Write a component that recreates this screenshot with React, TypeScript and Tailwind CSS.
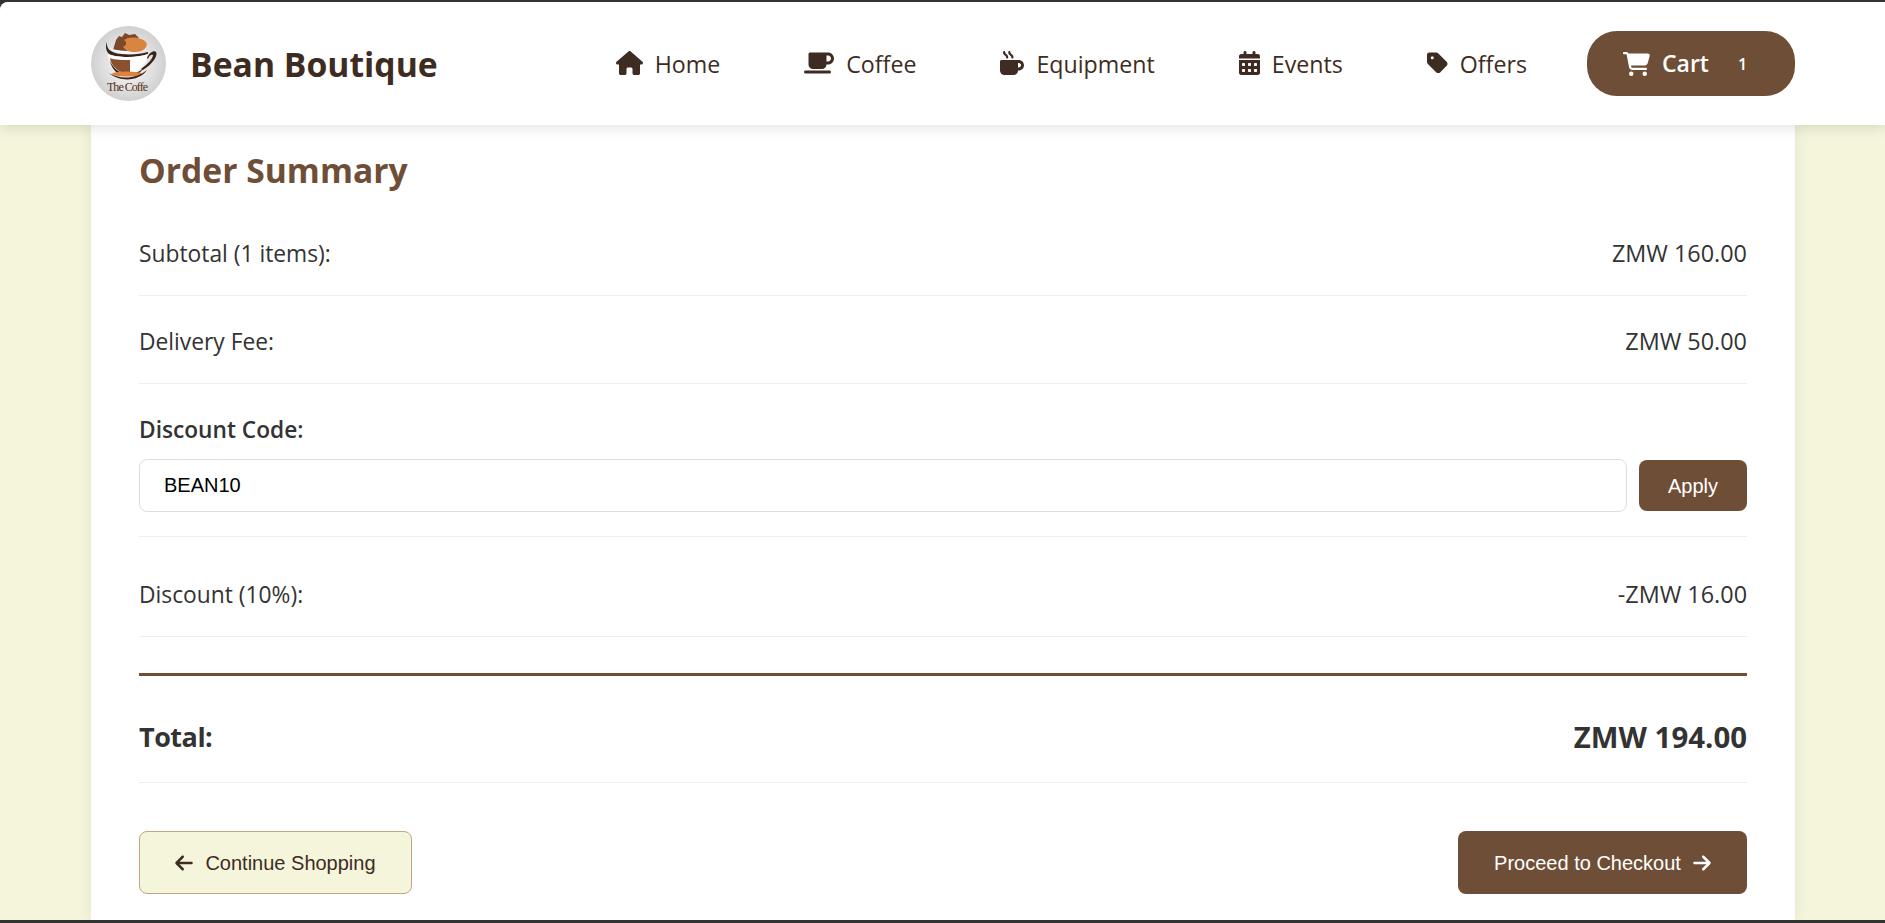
import { FaHouse, FaMugSaucer, FaMugHot, FaCalendarDays, FaTag, FaCartShopping, FaArrowLeft, FaArrowRight } from "react-icons/fa6";

const nav = [
  { label: "Home", Icon: FaHouse, size: "w-[27px] h-[24px]" },
  { label: "Coffee", Icon: FaMugSaucer, size: "w-[30px] h-[24px]" },
  { label: "Equipment", Icon: FaMugHot, size: "w-[24px] h-[24px]" },
  { label: "Events", Icon: FaCalendarDays, size: "w-[21px] h-[24px]" },
  { label: "Offers", Icon: FaTag, size: "w-[21px] h-[24px]" },
];

function Logo() {
  return (
    <svg width="75" height="75" viewBox="0 0 75 75" className="shrink-0">
      <defs>
        <radialGradient id="lg" cx="50%" cy="50%" r="50%">
          <stop offset="0%" stopColor="#ffffff" />
          <stop offset="100%" stopColor="#d0d0d0" />
        </radialGradient>
      </defs>
      <circle cx="37.5" cy="37.5" r="37.5" fill="url(#lg)" />
      <path d="M25 14 L28 10 L31 11 L34 7 L38 9 L44 8 L48 12 L40 16 L36 25 L22 24 Z" fill="#7a4a2b" />
      <path d="M33 14 C38 10 50 11 55 16 C58 21 52 26 44 26 C38 26 34 24 32 21 C36 19 36 16 33 14 Z" fill="#d9843f" />
      <path d="M16 16 C15 22 19 27 30 28 C40 29 50 28 57 26 L57 28 C46 32 26 32 18 28 C15 25 14 20 16 16 Z" fill="#3a2317" />
      <path d="M18 22 C23 26 32 27 42 27 L30 25 C25 24 21 23 18 22 Z" fill="#ffffff" />
      <path d="M17 28 C22 31 44 33 57 28 C55 38 50 44 42 46 L30 46 C22 43 18 36 17 28 Z" fill="#ffffff" />
      <path d="M19 32 C24 34 32 34 39 34 L39 46 L30 46 C24 43 20 38 19 32 Z" fill="#8a5030" />
      <path d="M56 32 C58 27 63 24 65 26 C67 29 63 37 52 44 L50 43 C58 37 62 32 62 29 C60 28 58 30 57 33 Z" fill="#3a2317" />
      <path d="M19 34 C22 43 28 47 37 48 C45 48 50 45 53 41 C49 50 40 50 33 50 C25 48 20 42 19 34 Z" fill="#3a2317" />
      <ellipse cx="36" cy="48" rx="15" ry="2.5" fill="#d9843f" />
      <path d="M18 47 C28 53 44 54 56 44 C48 56 28 56 18 47 Z" fill="#3a2317" />
      <text x="36.5" y="65" textAnchor="middle" fontSize="12" textLength="41" fontFamily="'Liberation Serif', serif" fill="#5a2f17">The Coffe</text>
    </svg>
  );
}

function Row({ label, value, extra = "" }: { label: string; value: string; extra?: string }) {
  return (
    <div className={`flex justify-between items-center border-b border-[#eeeeee] text-[22.8px] leading-[31px] text-[#333333] pb-[26px] ${extra}`}>
      <span>{label}</span>
      <span className="text-[23.4px]">{value}</span>
    </div>
  );
}

export default function App() {
  return (
    <div className="h-[923px] overflow-hidden flex flex-col bg-[#333333] font-['Open_Sans','Noto_Sans',sans-serif]">
      <div className="h-[2px] shrink-0" />
      <div className="flex-1 min-h-0 rounded-tl-[8px] overflow-hidden bg-[#f5f5dc] flex flex-col">
        <header className="relative z-10 h-[123px] shrink-0 bg-white shadow-[0_4px_12px_rgba(0,0,0,0.1)] pl-[91px] pr-[90px] flex items-center justify-between">
          <div className="flex items-center gap-[24px]">
            <Logo />
            <span className="pt-[2px] text-[33.7px] font-bold text-[#3e2c23] leading-none">Bean Boutique</span>
          </div>
          <nav className="flex items-center gap-[84px] text-[#3e2c23]">
            {nav.map(({ label, Icon, size }) => (
              <a key={label} className="flex items-center gap-[12px] text-[23.2px] font-medium leading-none">
                <Icon className={size} />
                <span className="pt-[2px]">{label}</span>
              </a>
            ))}
            <a className="flex items-center h-[65px] w-[208px] rounded-[30px] bg-[#6f4e37] text-white pl-[36px] text-[23px] font-semibold -ml-[24px]">
              <FaCartShopping className="w-[27px] h-[24px]" />
              <span className="ml-[12px]">Cart</span>
              <span className="ml-[29px] text-[16px]">1</span>
            </a>
          </nav>
        </header>
        <main className="flex-1 min-h-0 ml-[91px] mr-[90px] bg-white shadow-[0_0_15px_rgba(0,0,0,0.08)] px-[48px] overflow-hidden">
          <h2 className="pt-[22px] text-[33.65px] leading-[46px] font-bold text-[#6f4e37]">Order Summary</h2>
          <Row label="Subtotal (1 items):" value="ZMW 160.00" extra="pt-[45px]" />
          <Row label="Delivery Fee:" value="ZMW 50.00" extra="pt-[30px]" />
          <div className="border-b border-[#eeeeee] pt-[30px] pb-[24px]">
            <label className="block text-[22.7px] leading-[31px] font-semibold text-[#333333]">Discount Code:</label>
            <div className="flex items-center gap-[12px] mt-[14px]">
              <input
                readOnly
                value="BEAN10"
                className="flex-1 h-[53px] rounded-[8px] border border-[#dddddd] px-[24px] text-[20px] text-black font-['Liberation_Sans',sans-serif] outline-none"
              />
              <button className="w-[108px] h-[51px] rounded-[8px] bg-[#6f4e37] text-white text-[20px] font-['Liberation_Sans',sans-serif]">Apply</button>
            </div>
          </div>
          <Row label="Discount (10%):" value="-ZMW 16.00" extra="mt-[12px] pt-[30px]" />
          <div className="mt-[36px] h-[3px] bg-[#6f4e37]" />
          <div className="flex justify-between items-center border-b border-[#eeeeee] leading-[40px] font-bold text-[#333333] pt-[41px] pb-[25px]">
            <span className="text-[27px] tracking-[-0.5px]">Total:</span>
            <span className="text-[29.4px]">ZMW 194.00</span>
          </div>
          <div className="flex justify-between mt-[48px] font-['Liberation_Sans',sans-serif] text-[20px]">
            <button className="flex items-center gap-[12px] h-[63px] w-[273px] justify-center rounded-[8px] border border-[#c4a484] bg-[#f5f5dc] text-[#3e2c23]">
              <FaArrowLeft className="w-[18px] h-[20px]" />
              <span>Continue Shopping</span>
            </button>
            <button className="flex items-center gap-[12px] h-[63px] w-[289px] justify-center rounded-[8px] bg-[#6f4e37] text-white">
              <span>Proceed to Checkout</span>
              <FaArrowRight className="w-[18px] h-[20px]" />
            </button>
          </div>
        </main>
        <div className="h-[3px] shrink-0 bg-[#333333] relative z-10" />
      </div>
    </div>
  );
}
